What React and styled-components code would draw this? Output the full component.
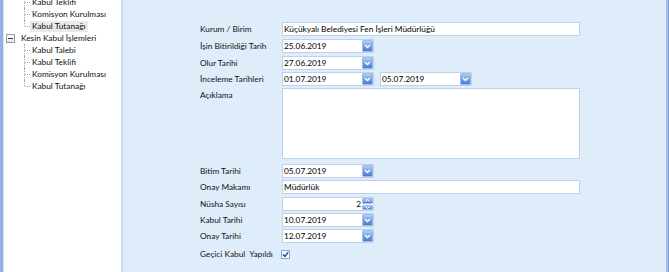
import React from 'react';
import styled, { createGlobalStyle } from 'styled-components';

const GlobalStyle = createGlobalStyle`
  html, body { margin: 0; padding: 0; background: #dfedfb; }
  body {
    font-family: Lato, "Liberation Sans", sans-serif;
    font-size: 8.3px;
    color: #000000;
    overflow: hidden;
  }
`;

const Frame = styled.div`
  display: flex;
  width: 669px;
  height: 272px;
  background: #dfedfb;
  overflow: hidden;
`;

const TreePanel = styled.div`
  flex: none;
  width: 118px;
  background: #ffffff;
  border-left: 3px solid #93b3e4;
  border-right: 2px solid #c9dcf3;
  box-shadow: inset 1px 0 #d3e2f7;
  overflow: hidden;
`;

const TreeList = styled.div`
  display: flex;
  flex-direction: column;
  margin-top: -4px;
`;

const TreeRow = styled.div`
  display: flex;
  align-items: center;
  height: 12px;
  white-space: nowrap;
`;

const Connector = styled.span`
  position: relative;
  flex: none;
  width: 6px;
  height: 100%;
  margin-left: 21px;
  &::before {
    content: '';
    position: absolute;
    left: 0;
    top: 0;
    height: ${p => (p.$last ? '6px' : '100%')};
    border-left: 1px dotted #a3a3a3;
  }
  &::after {
    content: '';
    position: absolute;
    left: 1px;
    top: 6px;
    width: 5px;
    border-top: 1px dotted #a3a3a3;
  }
`;

const ExpandBox = styled.span`
  position: relative;
  flex: none;
  box-sizing: border-box;
  width: 9px;
  height: 9px;
  margin-left: 3px;
  margin-right: 4px;
  border: 1px solid #9a9a9a;
  background: linear-gradient(#ffffff, #e6e6e6);
  &::after {
    content: '';
    position: absolute;
    left: 1px;
    top: 3px;
    width: 5px;
    height: 1px;
    background: #3a3a3a;
  }
`;

const ItemLabel = styled.span`
  display: inline-block;
  height: 11px;
  line-height: 11px;
  padding: 0 2px;
  color: #111;
  background: ${p => (p.$selected ? '#e9e9e9' : 'transparent')};
`;

const Main = styled.div`
  flex: 1;
  padding: 22px 0 0 77px;
  border-right: 1px solid #7fa3dc;
  box-shadow: inset -2px 0 #a3bfea;
`;

const Form = styled.div`
  display: flex;
  flex-direction: column;
`;

const Row = styled.div`
  display: flex;
  align-items: ${p => (p.$top ? 'flex-start' : 'center')};
  height: ${p => p.$h || 14}px;
  margin-top: ${p => p.$mt || 0}px;
`;

const Label = styled.span`
  flex: none;
  width: 82px;
  white-space: pre;
  color: #111;
  padding-top: ${p => (p.$top ? '2px' : '0')};
`;

const TextBox = styled.div`
  box-sizing: border-box;
  width: 298px;
  height: 14px;
  padding-left: 1px;
  border: 1px solid #bcd2ee;
  background: #ffffff;
  line-height: 12px;
  color: #000;
  white-space: nowrap;
`;

const Memo = styled.div`
  box-sizing: border-box;
  width: 298px;
  height: 71px;
  border: 1px solid #bcd2ee;
  background: #ffffff;
`;

const DateBox = styled.div`
  box-sizing: border-box;
  display: flex;
  width: 92px;
  height: 14px;
  margin-left: ${p => p.$ml || 0}px;
  border: 1px solid #bcd2ee;
  background: #ffffff;
`;

const FieldText = styled.span`
  flex: 1;
  padding: 0 1px;
  line-height: 12px;
  color: #000;
  text-align: ${p => (p.$right ? 'right' : 'left')};
`;

const DropButton = styled.span`
  box-sizing: border-box;
  flex: none;
  display: flex;
  align-items: center;
  justify-content: center;
  width: 11px;
  height: 12px;
  border: 1px solid #9fbbe6;
  border-radius: 1px;
  background: linear-gradient(#b3cff3 0%, #7aa4e4 45%, #4a7cd0 100%);
`;

const SpinButtons = styled.span`
  flex: none;
  display: flex;
  flex-direction: column;
  gap: 1px;
  width: 11px;
  height: 12px;
`;

const SpinHalf = styled.span`
  box-sizing: border-box;
  display: flex;
  align-items: center;
  justify-content: center;
  height: 5.5px;
  border: 1px solid #9fbbe6;
  border-radius: 1px;
  background: linear-gradient(#a9c7f1, #5686d5);
`;

const Check = styled.span`
  box-sizing: border-box;
  display: flex;
  align-items: center;
  justify-content: center;
  width: 9px;
  height: 9px;
  margin-left: -1px;
  border: 1px solid #8ba8d8;
  background: linear-gradient(#e9f1fc, #ffffff);
`;

const Chevron = () => (
  <svg width="7" height="5" viewBox="0 0 7 5">
    <polyline points="1,1 3.5,3.5 6,1" fill="none" stroke="#ffffff" strokeWidth="1.4" />
  </svg>
);

const SmallChevron = ({ up }) => (
  <svg width="5" height="3" viewBox="0 0 5 3">
    <polyline
      points={up ? '0.5,2.5 2.5,0.5 4.5,2.5' : '0.5,0.5 2.5,2.5 4.5,0.5'}
      fill="none"
      stroke="#ffffff"
      strokeWidth="1"
    />
  </svg>
);

const DateField = ({ value, ml }) => (
  <DateBox $ml={ml}>
    <FieldText>{value}</FieldText>
    <DropButton>
      <Chevron />
    </DropButton>
  </DateBox>
);

const SpinField = ({ value }) => (
  <DateBox>
    <FieldText $right>{value}</FieldText>
    <SpinButtons>
      <SpinHalf>
        <SmallChevron up />
      </SpinHalf>
      <SpinHalf>
        <SmallChevron />
      </SpinHalf>
    </SpinButtons>
  </DateBox>
);

const ChildItem = ({ text, last, selected }) => (
  <TreeRow>
    <Connector $last={last} />
    <ItemLabel $selected={selected}>{text}</ItemLabel>
  </TreeRow>
);

export default function App() {
  return (
    <>
      <GlobalStyle />
      <Frame>
        <TreePanel>
          <TreeList>
            <ChildItem text="Kabul Teklifi" />
            <ChildItem text="Komisyon Kurulması" />
            <ChildItem text="Kabul Tutanağı" last selected />
            <TreeRow>
              <ExpandBox />
              <ItemLabel>Kesin Kabul İşlemleri</ItemLabel>
            </TreeRow>
            <ChildItem text="Kabul Talebi" />
            <ChildItem text="Kabul Teklifi" />
            <ChildItem text="Komisyon Kurulması" />
            <ChildItem text="Kabul Tutanağı" last />
          </TreeList>
        </TreePanel>
        <Main>
          <Form>
            <Row>
              <Label>Kurum / Birim</Label>
              <TextBox>Küçükyalı Belediyesi Fen İşleri Müdürlüğü</TextBox>
            </Row>
            <Row $mt={3}>
              <Label>İşin Bitirildiği Tarih</Label>
              <DateField value="25.06.2019" />
            </Row>
            <Row $mt={3}>
              <Label>Olur Tarihi</Label>
              <DateField value="27.06.2019" />
            </Row>
            <Row $mt={2}>
              <Label>İnceleme Tarihleri</Label>
              <DateField value="01.07.2019" />
              <DateField value="05.07.2019" ml={6} />
            </Row>
            <Row $mt={2} $h={71} $top>
              <Label $top>Açıklama</Label>
              <Memo />
            </Row>
            <Row $mt={5}>
              <Label>Bitim Tarihi</Label>
              <DateField value="05.07.2019" />
            </Row>
            <Row $mt={2}>
              <Label>Onay Makamı</Label>
              <TextBox>Müdürlük</TextBox>
            </Row>
            <Row $mt={3}>
              <Label>Nüsha Sayısı</Label>
              <SpinField value="2" />
            </Row>
            <Row $mt={2}>
              <Label>Kabul Tarihi</Label>
              <DateField value="10.07.2019" />
            </Row>
            <Row $mt={2}>
              <Label>Onay Tarihi</Label>
              <DateField value="12.07.2019" />
            </Row>
            <Row $mt={5} $h={12}>
              <Label>Geçici Kabul  Yapıldı</Label>
              <Check>
                <svg width="7" height="7" viewBox="0 0 7 7">
                  <polyline points="1,3.5 3,5.5 6.2,1.2" fill="none" stroke="#24448f" strokeWidth="1.4" />
                </svg>
              </Check>
            </Row>
          </Form>
        </Main>
      </Frame>
    </>
  );
}
